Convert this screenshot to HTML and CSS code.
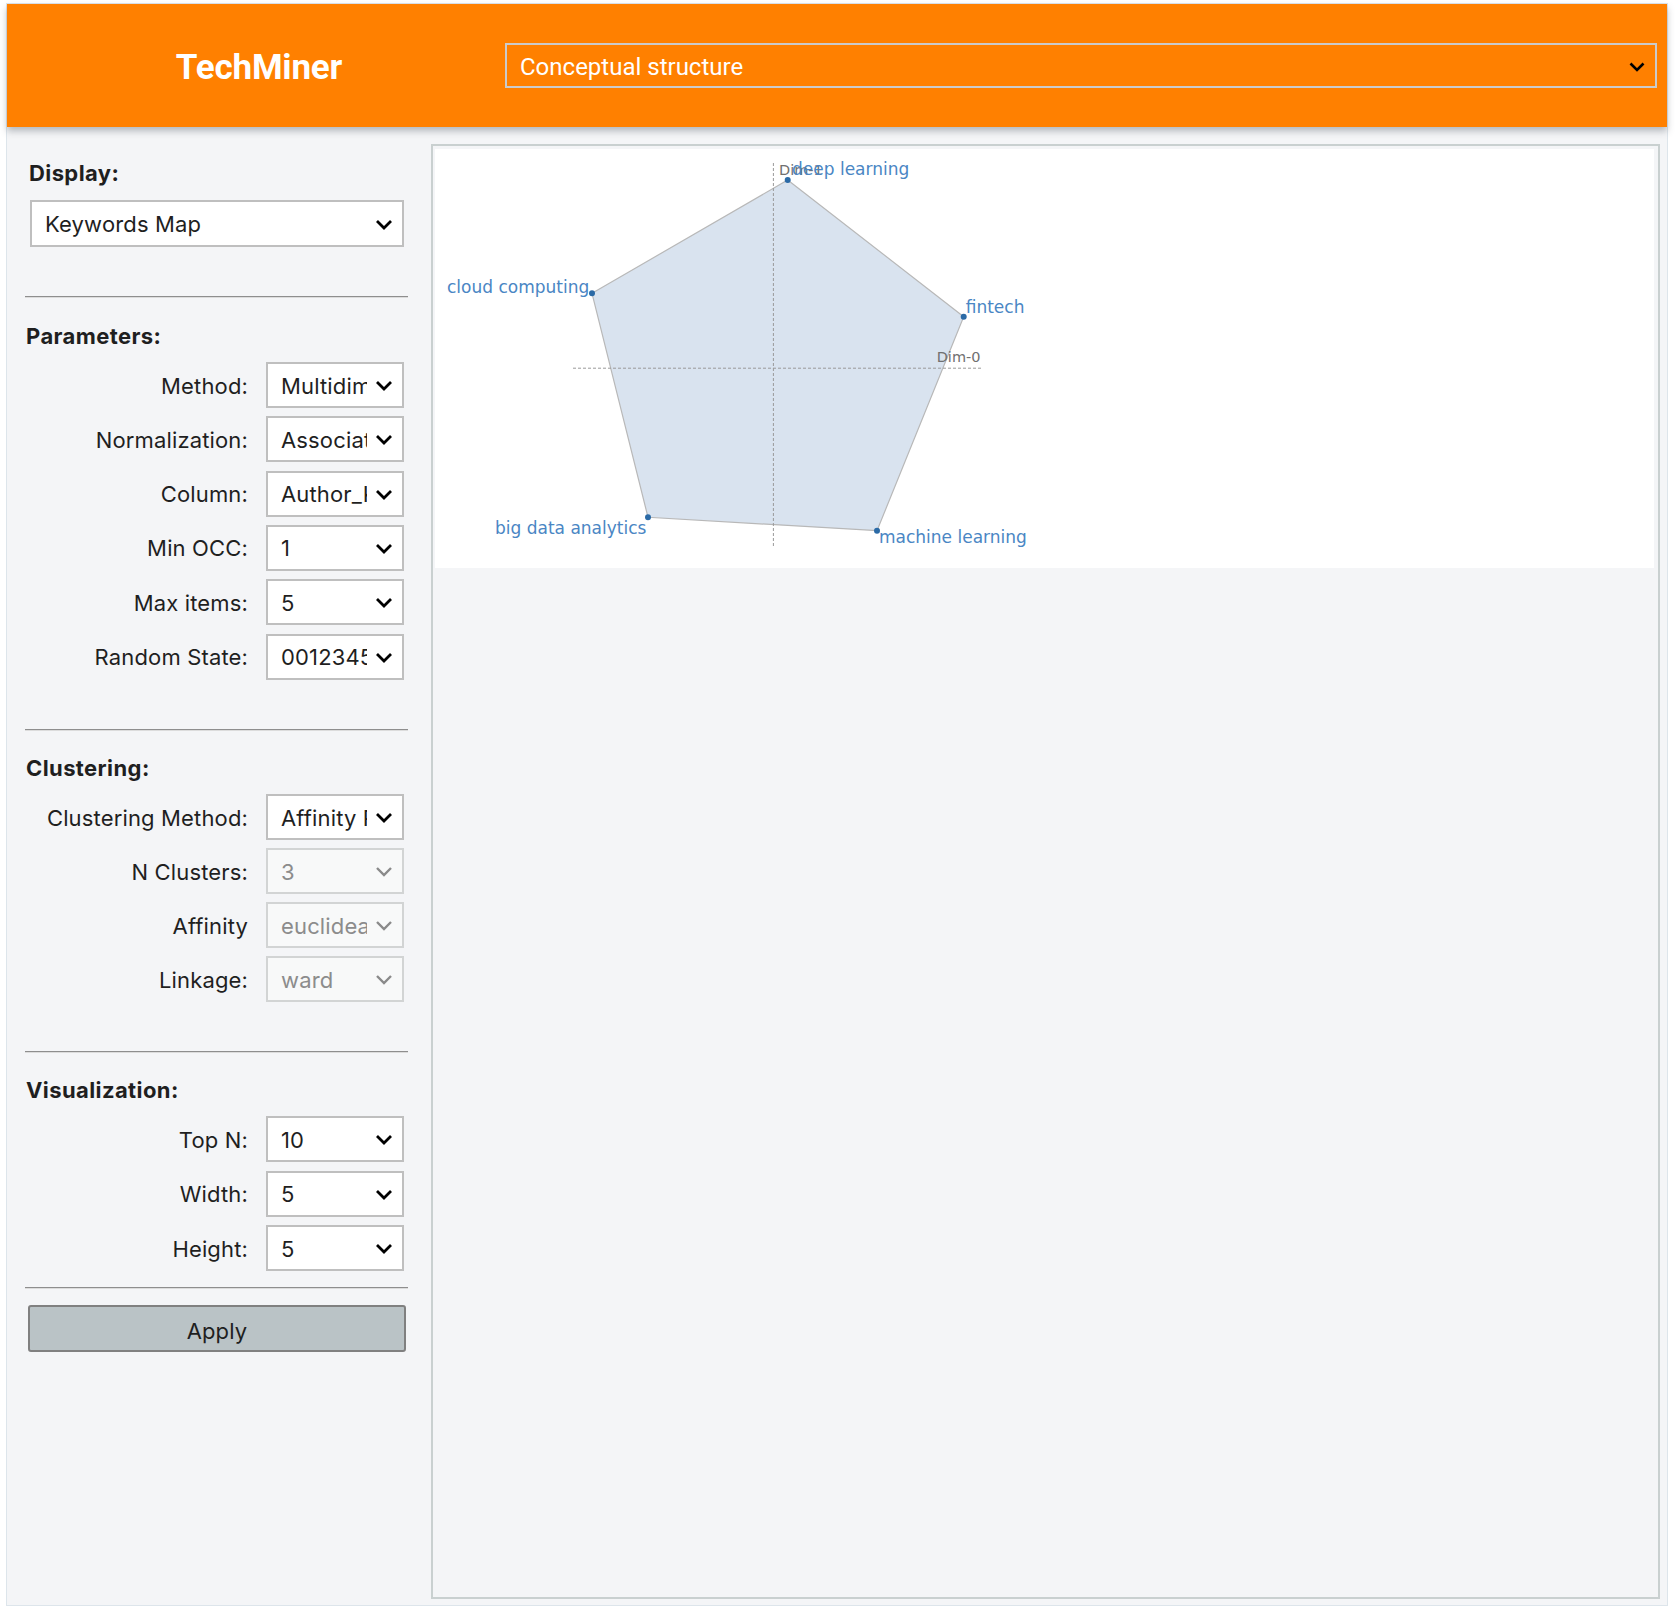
FILE: index.html
```html
<!DOCTYPE html>
<html lang="en">
<head>
<meta charset="utf-8">
<title>TechMiner</title>
<link rel="stylesheet" href="styles.css">
</head>
<body>
<div class="app">
  <header class="topbar">
    <div class="brand">TechMiner</div>
    <div class="menu-select">
      <span class="menu-value">Conceptual structure</span>
      <svg class="menu-chev" viewBox="0 0 16 10" width="16" height="10"><path d="M1.5 1.5 L8 8 L14.5 1.5" fill="none" stroke="#000" stroke-width="2.6"/></svg>
    </div>
  </header>
  <div class="content">
    <aside class="sidebar">
      <h3 class="heading heading-display">Display:</h3>
      <div class="select select-wide"><span class="val">Keywords Map</span><svg class="chev" viewBox="0 0 18 11"><path d="M2 2 L9 9 L16 2" fill="none" stroke="#000" stroke-width="2.8"/></svg></div>
      <hr class="rule">
      <h3 class="heading">Parameters:</h3>
      <div class="rows">
        <div class="row"><span class="lbl">Method:</span><div class="select"><span class="val">Multidimensional Scaling</span><svg class="chev" viewBox="0 0 18 11"><path d="M2 2 L9 9 L16 2" fill="none" stroke="#000" stroke-width="2.8"/></svg></div></div>
        <div class="row"><span class="lbl">Normalization:</span><div class="select"><span class="val">Association</span><svg class="chev" viewBox="0 0 18 11"><path d="M2 2 L9 9 L16 2" fill="none" stroke="#000" stroke-width="2.8"/></svg></div></div>
        <div class="row"><span class="lbl">Column:</span><div class="select"><span class="val">Author_Keywords</span><svg class="chev" viewBox="0 0 18 11"><path d="M2 2 L9 9 L16 2" fill="none" stroke="#000" stroke-width="2.8"/></svg></div></div>
        <div class="row"><span class="lbl">Min OCC:</span><div class="select"><span class="val">1</span><svg class="chev" viewBox="0 0 18 11"><path d="M2 2 L9 9 L16 2" fill="none" stroke="#000" stroke-width="2.8"/></svg></div></div>
        <div class="row"><span class="lbl">Max items:</span><div class="select"><span class="val">5</span><svg class="chev" viewBox="0 0 18 11"><path d="M2 2 L9 9 L16 2" fill="none" stroke="#000" stroke-width="2.8"/></svg></div></div>
        <div class="row"><span class="lbl">Random State:</span><div class="select"><span class="val">0012345</span><svg class="chev" viewBox="0 0 18 11"><path d="M2 2 L9 9 L16 2" fill="none" stroke="#000" stroke-width="2.8"/></svg></div></div>
      </div>
      <hr class="rule">
      <h3 class="heading heading-b">Clustering:</h3>
      <div class="rows rows-b">
        <div class="row"><span class="lbl">Clustering Method:</span><div class="select"><span class="val">Affinity Propagation</span><svg class="chev" viewBox="0 0 18 11"><path d="M2 2 L9 9 L16 2" fill="none" stroke="#000" stroke-width="2.8"/></svg></div></div>
        <div class="row"><span class="lbl">N Clusters:</span><div class="select disabled"><span class="val">3</span><svg class="chev" viewBox="0 0 18 11"><path d="M2 2 L9 9 L16 2" fill="none" stroke="#8a8a8a" stroke-width="2.4"/></svg></div></div>
        <div class="row"><span class="lbl">Affinity</span><div class="select disabled"><span class="val">euclidean</span><svg class="chev" viewBox="0 0 18 11"><path d="M2 2 L9 9 L16 2" fill="none" stroke="#8a8a8a" stroke-width="2.4"/></svg></div></div>
        <div class="row"><span class="lbl">Linkage:</span><div class="select disabled"><span class="val">ward</span><svg class="chev" viewBox="0 0 18 11"><path d="M2 2 L9 9 L16 2" fill="none" stroke="#8a8a8a" stroke-width="2.4"/></svg></div></div>
      </div>
      <hr class="rule">
      <h3 class="heading heading-b">Visualization:</h3>
      <div class="rows rows-c">
        <div class="row"><span class="lbl">Top N:</span><div class="select"><span class="val">10</span><svg class="chev" viewBox="0 0 18 11"><path d="M2 2 L9 9 L16 2" fill="none" stroke="#000" stroke-width="2.8"/></svg></div></div>
        <div class="row"><span class="lbl">Width:</span><div class="select"><span class="val">5</span><svg class="chev" viewBox="0 0 18 11"><path d="M2 2 L9 9 L16 2" fill="none" stroke="#000" stroke-width="2.8"/></svg></div></div>
        <div class="row"><span class="lbl">Height:</span><div class="select"><span class="val">5</span><svg class="chev" viewBox="0 0 18 11"><path d="M2 2 L9 9 L16 2" fill="none" stroke="#000" stroke-width="2.8"/></svg></div></div>
      </div>
      <hr class="rule rule-short">
      <button class="apply" type="button">Apply</button>
    </aside>
    <main class="panel">
      <div class="plot">
        <svg class="chart" viewBox="0 0 1219 419" width="1219" height="419">
          <polygon points="352.7,31 528.7,167.7 442,381.7 213,368.3 157,144.3" fill="#d9e3ef" stroke="#b8b8b8" stroke-width="1.2"/>
          <line x1="338.4" y1="14" x2="338.4" y2="399" stroke="#9a9a9a" stroke-width="1" stroke-dasharray="3 2"/>
          <line x1="138" y1="219.2" x2="546.7" y2="219.2" stroke="#9a9a9a" stroke-width="1" stroke-dasharray="3 2"/>
          <text class="axis-lbl" x="344" y="26">Dim-1</text>
          <text class="axis-lbl" x="501.7" y="212.7">Dim-0</text>
          <g fill="#2b6aa6">
            <circle cx="352.7" cy="31" r="3"/>
            <circle cx="528.7" cy="167.7" r="3"/>
            <circle cx="442" cy="381.7" r="3"/>
            <circle cx="213" cy="368.3" r="3"/>
            <circle cx="157" cy="144.3" r="3"/>
          </g>
          <text class="kw" x="357" y="26">deep learning</text>
          <text class="kw" x="530.7" y="163.7">fintech</text>
          <text class="kw" x="12" y="144.3">cloud computing</text>
          <text class="kw" x="60" y="385">big data analytics</text>
          <text class="kw" x="444" y="394.3">machine learning</text>
        </svg>
      </div>
    </main>
  </div>
</div>
</body>
</html>
```

FILE: styles.css
```css
html, body {
  margin: 0;
  padding: 0;
  background: #ffffff;
}

body {
  padding: 3px 8px 8px 6px;
  font-family: Inter, "Liberation Sans", sans-serif;
  color: #1f1f1f;
}

.app {
  border: 1px solid #dde5eb;
  background: #f4f5f7;
  width: 1660px;
  box-sizing: content-box;
}

.topbar {
  position: relative;
  z-index: 2;
  height: 123px;
  background: #ff8000;
  display: flex;
  align-items: center;
  box-shadow: 0 4px 7px rgba(60, 70, 80, 0.35);
}

.brand {
  width: 492px;
  padding: 4px 0 0 6px;
  text-align: center;
  font-family: Roboto, "Liberation Sans", sans-serif;
  font-weight: 700;
  font-size: 35px;
  color: #ffffff;
  letter-spacing: -0.2px;
}

.menu-select {
  flex: 1;
  margin-right: 10px;
  height: 45px;
  box-sizing: border-box;
  border: 2px solid #cbcbcb;
  display: flex;
  align-items: center;
  padding: 2px 10px 0 13px;
}

.menu-value {
  flex: 1;
  font-family: Roboto, "Liberation Sans", sans-serif;
  font-size: 24px;
  color: #ffffff;
}

.menu-chev {
  flex: none;
}

.content {
  display: flex;
  padding: 17px 7px 6px 0;
}

.sidebar {
  width: 424px;
  box-sizing: border-box;
  padding: 0 23px 0 18px;
  display: flex;
  flex-direction: column;
}

.heading {
  margin: 25px 0 0 1px;
  font-size: 22px;
  line-height: 26px;
  font-weight: 700;
  letter-spacing: 0.4px;
  color: #1f1f1f;
}

.heading-display {
  margin: 16px 0 0 4px;
}

.heading-b {
  margin-top: 24px;
}

.select {
  display: flex;
  align-items: center;
  height: 46px;
  box-sizing: border-box;
  border: 2px solid #bfbfbf;
  background: #ffffff;
  padding: 1px 9px 0 13px;
}

.select-wide {
  margin: 14px 0 0 5px;
  width: 374px;
  height: 47px;
}

.val {
  flex: 1;
  min-width: 0;
  overflow: hidden;
  white-space: nowrap;
  font-size: 22px;
  letter-spacing: 0.15px;
  color: #1f1f1f;
}

.chev {
  flex: none;
  width: 18px;
  height: 11px;
  margin-left: 8px;
}

.select.disabled {
  background: #f8f9f9;
  border-color: #d2d4d4;
}

.select.disabled .val {
  color: #8c8c8c;
}

.rule {
  margin: 49px 0 0 0;
  height: 0;
  border: 0;
  border-top: 1px solid #8e8e8e;
  border-bottom: 1px solid #dcdcdc;
}

.rule-short {
  margin-top: 16px;
}

.rows {
  margin-top: 13px;
  display: flex;
  flex-direction: column;
  gap: 8.33px;
}

.rows-b {
  margin-top: 13.5px;
  gap: 8.1px;
}

.rows-c {
  gap: 8.5px;
}

.row {
  display: grid;
  grid-template-columns: 223px 138px;
  column-gap: 18px;
  align-items: center;
}

.lbl {
  text-align: right;
  font-size: 22px;
  letter-spacing: 0.15px;
  color: #1f1f1f;
  white-space: nowrap;
  padding-top: 1px;
}

.apply {
  margin: 16px 2px 0 3px;
  height: 47px;
  border: 2px solid #808080;
  border-radius: 3px;
  background: #bac3c6;
  font-family: Inter, "Liberation Sans", sans-serif;
  font-size: 22px;
  letter-spacing: 0.15px;
  color: #1f1f1f;
  padding: 4px 0 0 0;
}

.panel {
  flex: 1;
  height: 1455px;
  box-sizing: border-box;
  border: 2px solid #c9d0d0;
  background: #f4f5f7;
}

.plot {
  margin: 3px 4px 0 2px;
  height: 419px;
  background: #ffffff;
}

.chart {
  display: block;
}

.kw {
  font-family: "DejaVu Sans", sans-serif;
  font-size: 17px;
  fill: #4a86c4;
}

.axis-lbl {
  font-family: "DejaVu Sans", sans-serif;
  font-size: 14.5px;
  fill: #707070;
}
```
